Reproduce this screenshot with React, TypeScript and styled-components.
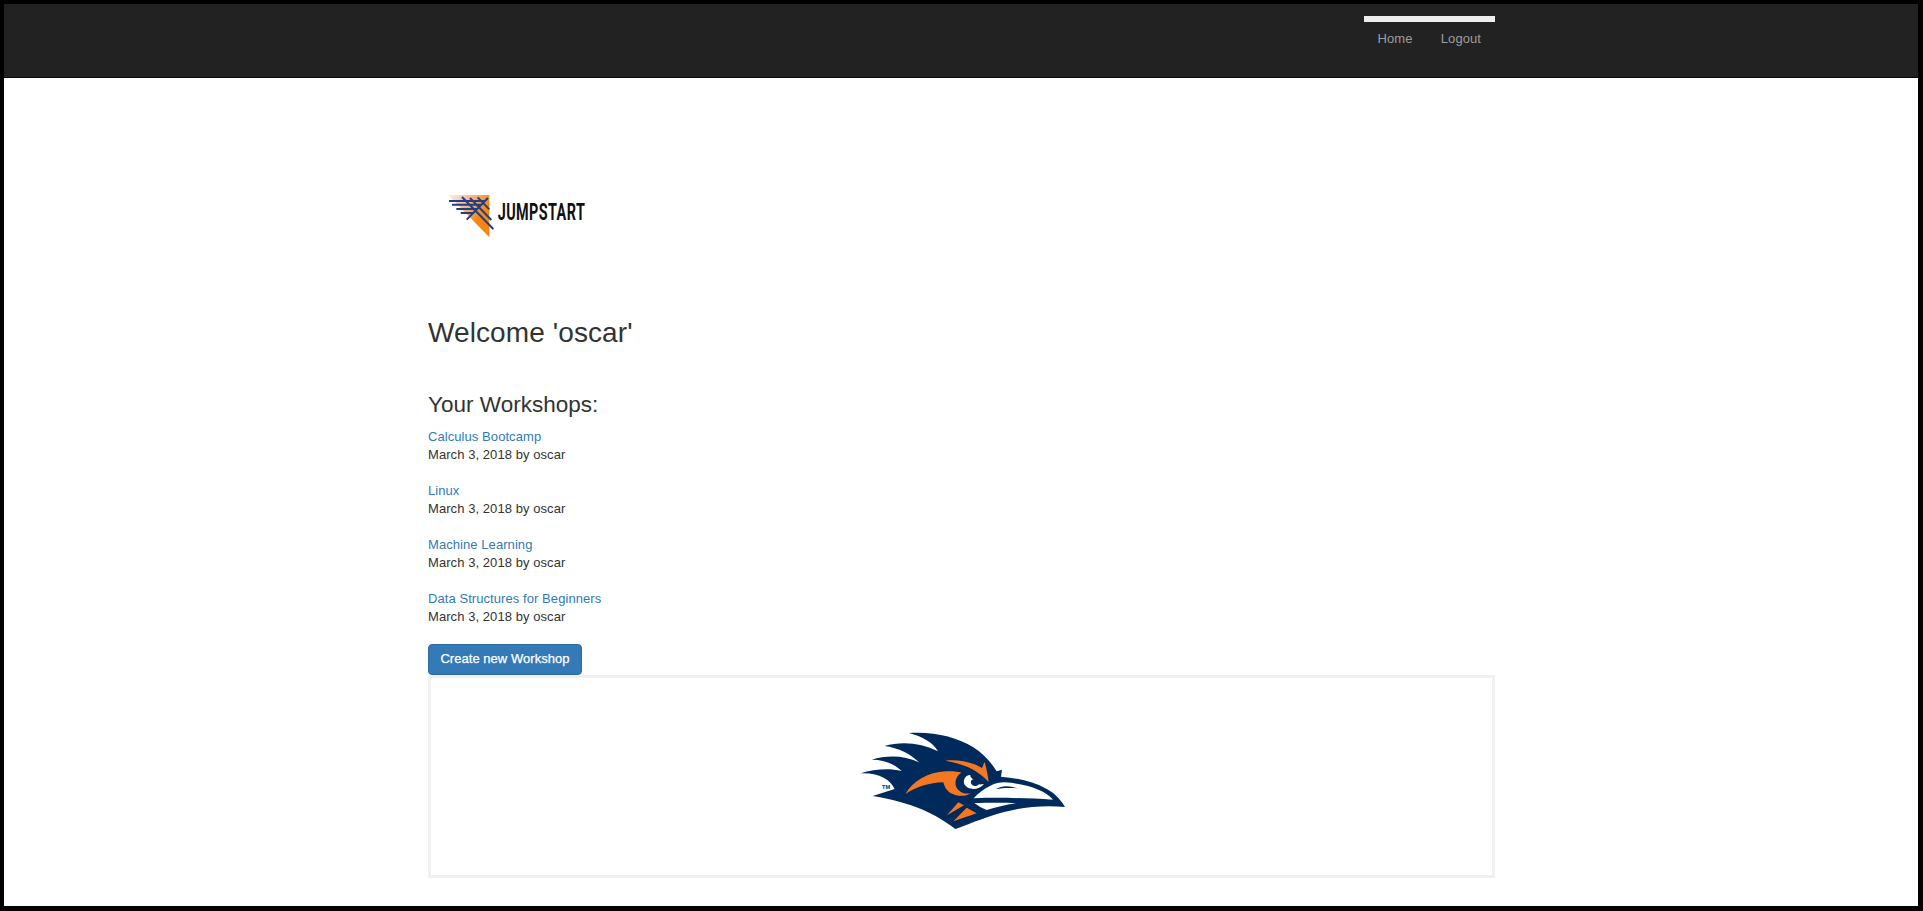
import React from "react";
import styled, { createGlobalStyle } from "styled-components";

const GlobalStyle = createGlobalStyle`
  * { box-sizing: border-box; }
  body {
    margin: 0;
    background: #fff;
    color: #333;
    font: 13px/18px "Liberation Sans", Arial, sans-serif;
    letter-spacing: 0.07px;
  }
`;

const Page = styled.div`
  height: 911px;
  border: solid #000;
  border-width: 4px 5px 5px 4px;
  overflow: hidden;
`;

const Navbar = styled.header`
  height: 74px;
  background: #222;
  border-bottom: 1px solid #080808;
`;

const Container = styled.div`
  width: 1067px;
  margin-left: 424px;
`;

const NavInner = styled(Container)`
  display: flex;
  justify-content: flex-end;
  padding-top: 12px;
`;

const Nav = styled.nav`
  display: flex;
  justify-content: space-between;
  width: 131px;
  border-top: 6px solid #eee;
  padding: 8px 14px 0 13.5px;
`;

const NavLink = styled.a`
  color: #9d9d9d;
  white-space: nowrap;
`;

const LogoRow = styled.div`
  height: 204px;
  padding: 102px 0 0 2px;
`;

const Welcome = styled.h2`
  margin: 35px 0 0;
  font-size: 28px;
  line-height: 32px;
  font-weight: 400;
  letter-spacing: 0.1px;
`;

const SectionTitle = styled.h3`
  margin: 43px 0 0;
  font-size: 22.5px;
  line-height: 26px;
  font-weight: 400;
  letter-spacing: 0.02px;
`;

const List = styled.div`
  display: flex;
  flex-direction: column;
  gap: 18px;
  margin-top: 10px;
`;

const Title = styled.a`
  display: block;
  width: max-content;
  color: #337ab7;
`;

const Meta = styled.div`
  width: max-content;
`;

const CreateButton = styled.button`
  display: block;
  width: 154px;
  height: 31px;
  margin-top: 18px;
  padding: 0 0 2px;
  border: 1px solid #2e6da4;
  border-radius: 4px;
  background: #337ab7;
  color: #fff;
  font: 13px/18px "Liberation Sans", Arial, sans-serif;
  letter-spacing: 0.04px;
  -webkit-text-stroke: 0.25px #fff;
`;

const Footer = styled.footer`
  display: flex;
  justify-content: center;
  height: 203px;
  border: 3px solid #f0f0f0;
  padding: 42px 0 0 6px;
`;

const workshops = [
  { title: "Calculus Bootcamp" },
  { title: "Linux" },
  { title: "Machine Learning" },
  { title: "Data Structures for Beginners" },
];

const Logo = () => (
  <svg width="170" height="70" viewBox="0 0 510 210">
    <defs>
      <linearGradient id="flame" x1="55" y1="45" x2="150" y2="110" gradientUnits="userSpaceOnUse">
        <stop offset="0" stopColor="#fff2ea" />
        <stop offset="0.5" stopColor="#f9b98a" />
        <stop offset="1" stopColor="#fa8611" />
      </linearGradient>
    </defs>
    <path d="M54 45H178V172Z" fill="url(#flame)" />
    <g stroke="#213f86" strokeWidth="6" fill="none">
      <path d="M57 63H165M66 74H154M79 87H143M92 99H132M96 51L190 147M120 54L184 120M143 52L178 88M174 54L110 119" />
    </g>
    <text
      transform="translate(203 121) scale(0.6 1)"
      textLength="436"
      fontFamily="Roboto, sans-serif"
      fontWeight="700"
      fontSize="72"
      fill="#111"
    >
      JUMPSTART
    </text>
  </svg>
);

const Roadrunner = () => (
  <svg width="230" height="120" viewBox="0 0 690 360">
    <path fill="#002a5c" d="M177 39C250 34 320 50 370 82C405 105 426 131 440 154L456 149L453 170C500 174 550 184 590 207C619 222 635 244 645 261C570 254 495 263 420 289C380 302 345 318 316 327C260 284 190 248 68 228L134 207C122 181 90 158 32 160C72 148 115 144 155 153C133 132 100 118 65 119C110 105 162 105 207 127C184 103 145 83 103 78C154 63 214 68 264 94C250 68 216 49 177 39Z" />
    <g fill="#f47721">
      <path d="M166 223C188 184 232 156 288 154C308 153 322 155 334 158C313 170 310 200 329 213C340 222 350 222 363 219C345 232 318 229 300 218C285 208 282 193 280 187C239 188 197 200 166 223Z" />
      <path d="M286 122C325 117 370 127 396 144L404 125C409 146 414 165 416 186C383 150 342 132 286 122Z" />
      <path d="M291 286L325 247L342 256ZM310 304L350 263L380 280Z" />
    </g>
    <path fill="#fff" d="M361 165C344 165 337 184 345 196C356 211 386 211 402 192C396 193 391 194 387 193C377 204 360 196 363 184C364 179 368 178 372 179C363 174 360 169 361 165Z" />
    <path fill="#fff" d="M371 235C385 219 402 206 421 197C436 189 449 187 463 187C530 191 585 211 609 239C530 234 440 232 371 235ZM373 249C410 249 460 247 498 250C465 255 438 262 410 270Q390 263 373 249Z" />
    <path fill="#002a5c" d="M437 208C455 196 477 196 502 205C480 203 455 204 437 208Z" />
    <text x="96" y="206" textLength="24" lengthAdjust="spacingAndGlyphs" fontFamily="'Liberation Sans', Arial, sans-serif" fontWeight="700" fontSize="15" fill="#002a5c">TM</text>
  </svg>
);

export default function App() {
  return (
    <Page>
      <GlobalStyle />
      <Navbar>
        <NavInner>
          <Nav>
            <NavLink>Home</NavLink>
            <NavLink>Logout</NavLink>
          </Nav>
        </NavInner>
      </Navbar>
      <Container>
        <LogoRow><Logo /></LogoRow>
        <Welcome>Welcome 'oscar'</Welcome>
        <SectionTitle>Your Workshops:</SectionTitle>
        <List>
          {workshops.map((w) => (
            <div key={w.title}>
              <Title>{w.title}</Title>
              <Meta>March 3, 2018 by oscar</Meta>
            </div>
          ))}
        </List>
        <CreateButton>Create new Workshop</CreateButton>
        <Footer><Roadrunner /></Footer>
      </Container>
    </Page>
  );
}
